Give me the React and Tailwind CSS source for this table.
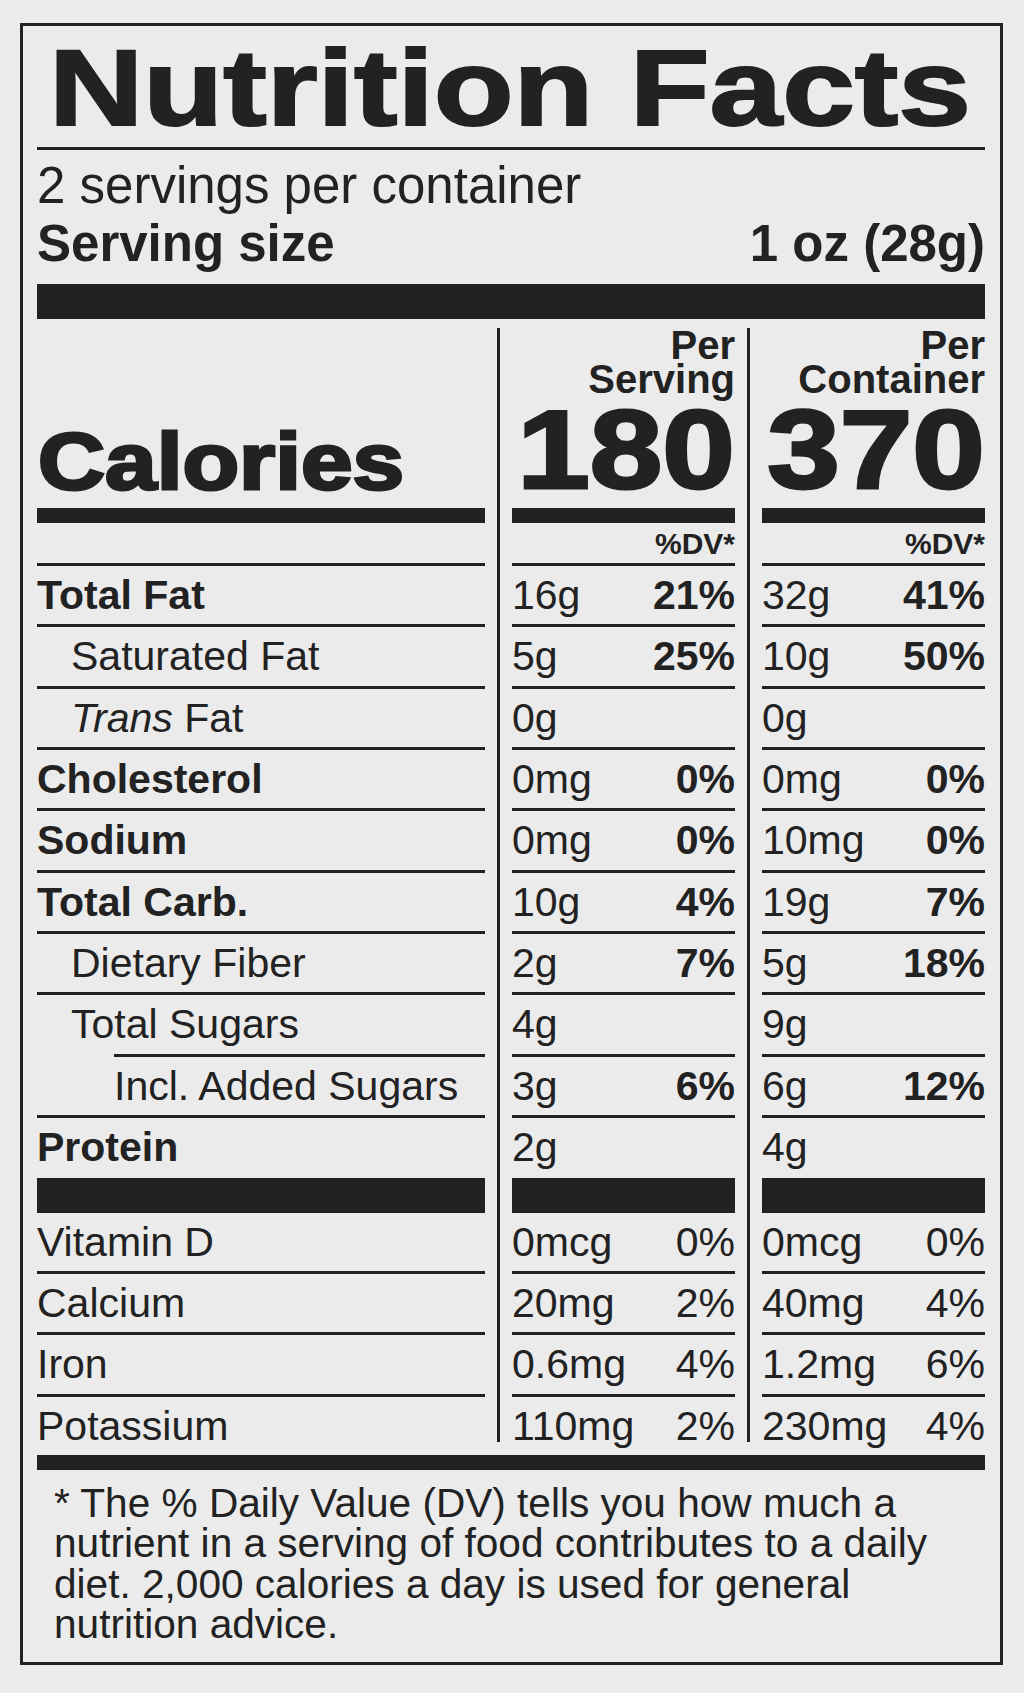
import React from "react";

const rows = [
  { label: "Total Fat", kind: "bold", v1: "16g", p1: "21%", v2: "32g", p2: "41%" },
  { label: "Saturated Fat", kind: "sub", v1: "5g", p1: "25%", v2: "10g", p2: "50%" },
  { label: (<><i>Trans</i> Fat</>), kind: "sub", v1: "0g", v2: "0g" },
  { label: "Cholesterol", kind: "bold", v1: "0mg", p1: "0%", v2: "0mg", p2: "0%" },
  { label: "Sodium", kind: "bold", v1: "0mg", p1: "0%", v2: "10mg", p2: "0%" },
  { label: "Total Carb.", kind: "bold", v1: "10g", p1: "4%", v2: "19g", p2: "7%" },
  { label: "Dietary Fiber", kind: "sub", v1: "2g", p1: "7%", v2: "5g", p2: "18%" },
  { label: "Total Sugars", kind: "sub", v1: "4g", v2: "9g" },
  { label: "Incl. Added Sugars", kind: "sub2", v1: "3g", p1: "6%", v2: "6g", p2: "12%" },
  { label: "Protein", kind: "bold", v1: "2g", v2: "4g", size: "protein" },
];

const vitamins = [
  { label: "Vitamin D", v1: "0mcg", p1: "0%", v2: "0mcg", p2: "0%", size: "first" },
  { label: "Calcium", v1: "20mg", p1: "2%", v2: "40mg", p2: "4%" },
  { label: "Iron", v1: "0.6mg", p1: "4%", v2: "1.2mg", p2: "6%" },
  { label: "Potassium", v1: "110mg", p1: "2%", v2: "230mg", p2: "4%", size: "last" },
];

function Divider() {
  return (
    <div className="flex justify-center">
      <div className="w-[3px] bg-[#222222]" />
    </div>
  );
}

function sizeClass(size) {
  if (size === "protein") return "h-[63px] border-t-[3px] border-[#222222]";
  if (size === "first") return "h-[58px]";
  if (size === "last") return "h-[48px] border-t-[3px] border-[#222222]";
  return "h-[61.33px] border-t-[3px] border-[#222222]";
}

function Row({ r, pBold }) {
  const sc = sizeClass(r.size);
  let labelCls = "font-normal";
  if (r.kind === "bold") labelCls = "font-bold";
  if (r.kind === "sub") labelCls = "font-normal pl-[34px]";
  if (r.kind === "sub2") labelCls = "font-normal ml-[77px]";
  const pc = pBold ? "font-bold" : "font-normal";
  return (
    <>
      <div className={sc + " " + labelCls + " text-[41px] leading-[58.33px] whitespace-nowrap"}>
        {r.label}
      </div>
      <Divider />
      <div className={sc + " flex justify-between text-[41px] leading-[58.33px] whitespace-nowrap"}>
        <span>{r.v1}</span>
        <span className={pc}>{r.p1 || ""}</span>
      </div>
      <Divider />
      <div className={sc + " flex justify-between text-[41px] leading-[58.33px] whitespace-nowrap"}>
        <span>{r.v2}</span>
        <span className={pc}>{r.p2 || ""}</span>
      </div>
    </>
  );
}

function CalCol({ big }) {
  return (
    <div className="h-[235px] flex flex-col">
      <div className="text-right font-bold text-[40px] leading-[34px]">
        Per
        <br />
        {big.label}
      </div>
      <div className="text-right text-[112px] leading-[107px] font-bold whitespace-nowrap">
        <span className="inline-block origin-right [transform:scaleX(1.165)] [-webkit-text-stroke:3px_#222222]">
          {big.num}
        </span>
      </div>
      <div className="mt-[5px] h-[15px] bg-[#222222]" />
      <div className="mt-[6px] text-right font-bold text-[30px] leading-[30px]">%DV*</div>
    </div>
  );
}

export default function App() {
  return (
    <div className="min-h-screen bg-[#ebebeb] text-[#222222] [font-family:'Liberation_Sans',Arial,Helvetica,sans-serif] pt-[23px] pl-[20px]">
      <div className="w-[983px] border-[3px] border-[#222222] pl-[14px] pr-[15px] pt-[8px] pb-[17px]">
        {/* Heading */}
        <div className="pl-[12px] text-[108px] leading-[107px] font-bold whitespace-nowrap">
          <span className="inline-block origin-left [transform:scaleX(1.21)] [-webkit-text-stroke:2px_#222222]">
            Nutrition Facts
          </span>
        </div>
        <div className="mt-[6px] h-[3px] bg-[#222222]" />

        {/* Servings */}
        <div className="mt-[7px] text-[51px] leading-[58px]">2 servings per container</div>
        <div className="flex justify-between text-[51px] leading-[58px] font-bold">
          <span>Serving size</span>
          <span>1 oz (28g)</span>
        </div>
        <div className="mt-[11px] h-[35px] bg-[#222222]" />

        {/* Table */}
        <div className="mt-[9px] grid grid-cols-[448px_27px_223px_27px_223px]">
          {/* Calories header */}
          <div className="h-[235px] flex flex-col">
            <div className="mt-[94px] pl-[1px] text-[80px] leading-[80px] font-bold whitespace-nowrap">
              <span className="inline-block origin-left [transform:scaleX(1.16)] [-webkit-text-stroke:3px_#222222]">
                Calories
              </span>
            </div>
            <div className="mt-[6px] h-[15px] bg-[#222222]" />
          </div>
          <Divider />
          <CalCol big={{ label: "Serving", num: "180" }} />
          <Divider />
          <CalCol big={{ label: "Container", num: "370" }} />

          {rows.map((r, i) => (
            <Row key={"r" + i} r={r} pBold={true} />
          ))}

          {/* thick bar */}
          <div className="h-[35px] bg-[#222222]" />
          <Divider />
          <div className="h-[35px] bg-[#222222]" />
          <Divider />
          <div className="h-[35px] bg-[#222222]" />

          {vitamins.map((r, i) => (
            <Row key={"v" + i} r={r} pBold={false} />
          ))}
        </div>

        <div className="mt-[13px] h-[15px] bg-[#222222]" />

        <p className="mt-[13px] pl-[17px] text-[40.6px] leading-[40.6px]">
          * The % Daily Value (DV) tells you how much a nutrient in a serving of food contributes to a daily diet. 2,000 calories a day is used for general nutrition advice.
        </p>
      </div>
    </div>
  );
}
